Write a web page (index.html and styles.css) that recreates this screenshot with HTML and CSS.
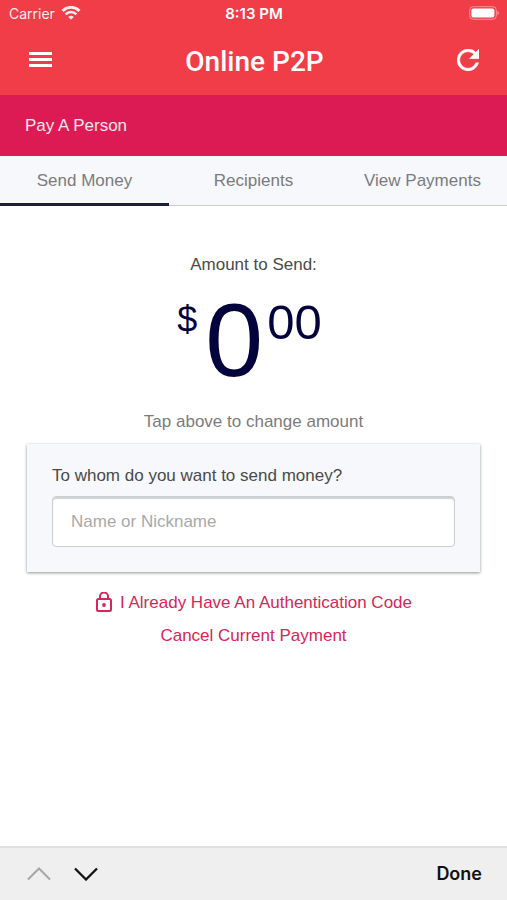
FILE: index.html
```html
<!DOCTYPE html>
<html lang="en">
<head>
<meta charset="utf-8">
<meta name="viewport" content="width=device-width, initial-scale=1">
<title>Online P2P</title>
<link rel="stylesheet" href="styles.css">
</head>
<body>
<header class="top">
  <div class="status">
    <div class="carrier">
      <span>Carrier</span>
      <svg width="20" height="14" viewBox="0 0 20 14" fill="none" stroke="#fff" aria-hidden="true">
        <path d="M1.500 4.900a12 12 0 0 1 17 0" stroke-width="3"/>
        <path d="M4.600 8.300a7.600 7.600 0 0 1 10.800 0" stroke-width="2.500"/>
        <path d="M10 13.800 7.200 11a4 4 0 0 1 5.600 0z" fill="#fff" stroke="none"/>
      </svg>
    </div>
    <time class="clock">8:13 PM</time>
    <svg class="battery" width="30" height="14" viewBox="0 0 30 14" aria-hidden="true">
      <rect x=".7" y=".7" width="26.600" height="12.600" rx="3.600" fill="none" stroke="#fff" stroke-opacity=".45"/>
      <rect x="2.400" y="2.400" width="23" height="9.200" rx="2" fill="#fff"/>
      <path d="M28.500 5v4c1.500-.5 1.500-3.500 0-4z" fill="#fff" fill-opacity=".6"/>
    </svg>
  </div>
  <div class="bar">
    <button class="icon-button" type="button" aria-label="Menu">
      <svg width="24" height="16" viewBox="0 0 24 16" fill="#fff"><path d="M1 0h23v3H1zM1 6h23v3H1zM1 12h23v3H1z"/></svg>
    </button>
    <h1>Online P2P</h1>
    <button class="icon-button" type="button" aria-label="Refresh">
      <svg width="22" height="22" viewBox="4 4 16 16" fill="#fff" stroke="#fff" stroke-width=".3"><path d="M17.650 6.350A7.958 7.958 0 0 0 12 4a8 8 0 1 0 7.730 10h-2.080A6 6 0 1 1 12 6c1.660 0 3.140.69 4.220 1.780L13 11h7V4z"/></svg>
    </button>
  </div>
</header>
<h2 class="section-title">Pay A Person</h2>
<nav class="tabs">
  <a class="tab active" href="#send" aria-current="page">Send Money</a>
  <a class="tab" href="#recipients">Recipients</a>
  <a class="tab" href="#payments">View Payments</a>
</nav>
<main>
  <p class="amount-label">Amount to Send:</p>
  <button class="amount" type="button">
    <span class="currency">$</span>
    <span class="whole">0</span>
    <span class="cents">00</span>
  </button>
  <p class="hint">Tap above to change amount</p>
  <form class="card">
    <label for="recipient">To whom do you want to send money?</label>
    <input id="recipient" type="text" placeholder="Name or Nickname">
  </form>
  <div class="links">
    <a href="#code">
      <svg width="18" height="22" viewBox="0 0 18 22" fill="none" stroke="currentColor" stroke-width="2" aria-hidden="true">
        <rect x="2" y="7" width="14" height="12" rx="1.500"/>
        <path d="M5 7V4.500a4 4 0 0 1 8 0V7"/>
        <circle cx="9" cy="13" r="1.900" fill="currentColor" stroke="none"/>
      </svg>
      <span>I Already Have An Authentication Code</span>
    </a>
    <a href="#cancel">Cancel Current Payment</a>
  </div>
</main>
<footer class="accessory">
  <button class="arrow" type="button" aria-label="Previous field" disabled>
    <svg width="24" height="14" viewBox="0 0 24 14" fill="none" stroke="#a6a6a6" stroke-width="2"><path d="M1 12.500 12 1.500 23 12.500"/></svg>
  </button>
  <button class="arrow" type="button" aria-label="Next field">
    <svg width="24" height="14" viewBox="0 0 24 14" fill="none" stroke="#111" stroke-width="2.300"><path d="M1 1.500 12 12.500 23 1.500"/></svg>
  </button>
  <button class="done" type="button">Done</button>
</footer>
</body>
</html>
```
FILE: styles.css
```css
* {
  box-sizing: border-box;
}

body {
  margin: 0;
  min-height: 100vh;
  display: flex;
  flex-direction: column;
  background: #fff;
  color: #4a4a4a;
  font: 17px/20px "Liberation Sans", Arial, sans-serif;
}

button {
  margin: 0;
  padding: 0;
  border: 0;
  background: none;
  color: inherit;
  font: inherit;
}

h1, h2, p {
  margin: 0;
  font-weight: 400;
}

a {
  color: inherit;
  text-decoration: none;
}

svg {
  display: block;
}

.top {
  background: #f13d48;
  color: #fff;
}

.status {
  display: grid;
  grid-template-columns: 1fr auto 1fr;
  align-items: center;
  height: 28px;
  padding: 0 8px 0 9px;
  font: 14px/28px Inter, sans-serif;
}

.carrier {
  display: flex;
  align-items: center;
  gap: 6px;
  opacity: 0.9;
}

.carrier svg {
  margin-bottom: 2px;
}

.clock {
  font-size: 15px;
  font-weight: 600;
}

.battery {
  justify-self: end;
  margin-bottom: 2px;
}

.bar {
  display: flex;
  align-items: center;
  justify-content: space-between;
  height: 67px;
  padding: 0 28px;
}

.bar h1 {
  font: 500 28px/36px Roboto, sans-serif;
}

.icon-button {
  padding-bottom: 4px;
}

.section-title {
  padding: 21px 25px 20px;
  background: #dc1b54;
  color: #fde4ec;
  font-size: 17px;
}

.tabs {
  display: grid;
  grid-template-columns: repeat(3, 1fr);
  background: #f6f8fb;
  color: #7b7b7d;
  text-align: center;
}

.tab {
  height: 50px;
  padding-top: 15px;
  border-bottom: 1px solid #c9cbce;
}

.tab.active {
  border-bottom: 3px solid #1d1e45;
}

main {
  flex: 1;
  display: flex;
  flex-direction: column;
  align-items: center;
  padding: 49px 27px 20px;
}

.amount {
  display: flex;
  align-items: flex-start;
  margin-top: 13px;
  color: #04043c;
  line-height: 1;
}

.currency {
  margin: 14px 8px 0 0;
  font-size: 36px;
}

.whole {
  font-size: 104px;
}

.cents {
  margin: 10px 8px 0 4px;
  font-size: 49px;
}

.hint {
  margin-top: 20px;
  color: #7b7b7d;
}

.card {
  align-self: stretch;
  margin-top: 12px;
  padding: 22px 25px 25px;
  background: #f6f8fb;
  box-shadow: 0 1px 3px #8d9496;
}

.card label {
  display: block;
}

.card input {
  display: block;
  width: 100%;
  height: 51px;
  margin-top: 10px;
  padding: 0 18px;
  border: 1px solid #cccfd1;
  border-radius: 4px;
  background: #fff;
  box-shadow: inset 0 2px 1px #cfd1d2;
  color: #4a4a4a;
  font: inherit;
}

.card input::placeholder {
  color: #a9a9a9;
}

.links {
  display: flex;
  flex-direction: column;
  align-items: center;
  gap: 13px;
  margin-top: 21px;
  color: #d72659;
}

.links a {
  display: flex;
  align-items: center;
  gap: 7px;
  height: 20px;
}

.accessory {
  display: flex;
  align-items: center;
  gap: 23px;
  height: 54px;
  padding: 0 25px 0 27px;
  border-top: 2px solid #e0e0e0;
  background: #efefef;
}

.done {
  margin-left: auto;
  color: #111;
  font: 600 18px/24px Inter, sans-serif;
}
```
